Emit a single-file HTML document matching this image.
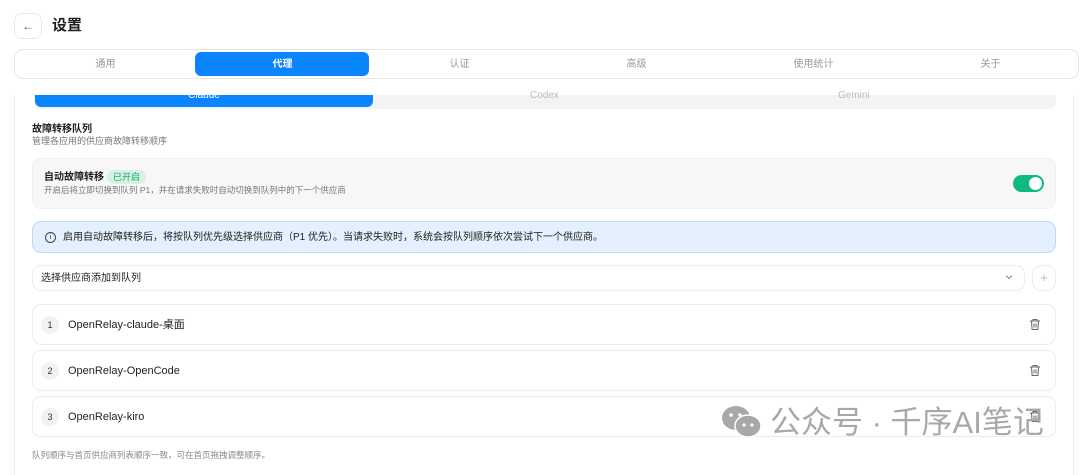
<!DOCTYPE html>
<html><head><meta charset="utf-8"><style>
*{box-sizing:border-box;margin:0;padding:0}
body{width:1080px;height:467px;overflow:hidden;background:#fff;font-family:"Liberation Sans","Noto Sans CJK SC",sans-serif;position:relative;color:#1f1f1f;line-height:1.2}
.abs{position:absolute}
.back{left:14px;top:13px;width:28px;height:26px;border:1px solid #e8e8e8;border-radius:8px;display:flex;align-items:center;justify-content:center;color:#666;font-size:12px}
.tabs{left:14px;top:49px;width:1065px;height:30px;border:1px solid #e6e6e6;border-radius:9px}
.tab{position:absolute;top:1px;height:28px;line-height:28px;font-size:10px;color:#999;text-align:center;width:177px}
.panel{left:14px;top:95px;width:1060px;height:380px;border-left:1px solid #eee;border-right:1px solid #eee}
.card{border:1px solid #ececec;border-radius:9px;background:#fff}
.item{left:32px;width:1024px;height:41px}
.num{position:absolute;left:8px;top:11px;width:18px;height:18px;border-radius:50%;background:#f2f2f2;font-size:9px;text-align:center;line-height:18px;color:#333}
.name{position:absolute;left:35px;top:1px;height:39px;line-height:39px;font-size:11px;color:#222}
.trash{position:absolute;right:14px;top:13px}
</style></head><body>
<div class="abs back">&#8592;</div>
<div class="abs" style="left:52px;top:16px;font-size:15px;font-weight:bold;line-height:20px">设置</div>
<div class="abs tabs">
<div class="abs" style="left:180px;top:2px;width:174px;height:24px;background:#0a84ff;border-radius:6px"></div>
<div class="tab" style="left:2px">通用</div>
<div class="tab" style="left:179px;color:#fff;font-weight:bold">代理</div>
<div class="tab" style="left:356px">认证</div>
<div class="tab" style="left:533px">高级</div>
<div class="tab" style="left:710px">使用统计</div>
<div class="tab" style="left:887px">关于</div>
</div>
<div class="abs panel"></div>
<div class="abs" style="left:34px;top:95px;width:1022px;height:14px;background:#f3f3f3;border-radius:0 0 7px 7px"></div>
<div class="abs" style="left:35px;top:95px;width:338px;height:12px;background:#0a84ff;border-radius:0 0 6px 6px;overflow:hidden;color:#fff;font-size:10px;text-align:center;line-height:2px">Claude</div>
<div class="abs" style="left:530px;top:95px;font-size:10px;color:#bbb;line-height:2px">Codex</div>
<div class="abs" style="left:838px;top:95px;font-size:10px;color:#bbb;line-height:2px">Gemini</div>
<div class="abs" style="left:32px;top:123px;font-size:10px;font-weight:bold;line-height:13px">故障转移队列</div>
<div class="abs" style="left:32px;top:136px;font-size:9px;color:#777;line-height:11px">管理各应用的供应商故障转移顺序</div>
<div class="abs" style="left:32px;top:158px;width:1024px;height:51px;background:#f7f7f7;border:1px solid #efefef;border-radius:9px"></div>
<div class="abs" style="left:44px;top:171px;font-size:10px;font-weight:bold;line-height:13px">自动故障转移</div>
<div class="abs" style="left:107px;top:170px;height:14px;padding:0 6px;background:#d5f2e5;color:#1aa56b;border-radius:7px;font-size:9px;line-height:14px">已开启</div>
<div class="abs" style="left:44px;top:185px;font-size:8.5px;color:#777;line-height:11px">开启后将立即切换到队列 P1，并在请求失败时自动切换到队列中的下一个供应商</div>
<div class="abs" style="left:1013px;top:175px;width:31px;height:17px;background:#10b981;border-radius:9px"><div class="abs" style="right:2px;top:2px;width:13px;height:13px;background:#fff;border-radius:50%"></div></div>
<div class="abs" style="left:32px;top:221px;width:1024px;height:32px;background:#e4f0fd;border:1px solid #bcd9f8;border-radius:9px"></div>
<div class="abs" style="left:45px;top:232px;width:11px;height:11px;border:1px solid #444;border-radius:50%;font-size:7px;text-align:center;line-height:9px">i</div>
<div class="abs" style="left:63px;top:231px;font-size:10px;color:#222;line-height:13px">启用自动故障转移后，将按队列优先级选择供应商（P1 优先）。当请求失败时，系统会按队列顺序依次尝试下一个供应商。</div>
<div class="abs card" style="left:32px;top:265px;width:993px;height:26px"></div>
<div class="abs" style="left:41px;top:266px;font-size:10px;line-height:26px">选择供应商添加到队列</div>
<svg class="abs" style="left:1005px;top:274px" width="8" height="6" viewBox="0 0 8 6"><path d="M1 1.5l3 3 3-3" fill="none" stroke="#888" stroke-width="1"/></svg>
<div class="abs card" style="left:1032px;top:265px;width:24px;height:26px;text-align:center;line-height:24px;color:#bbb;font-size:13px">+</div>
<div class="abs card item" style="top:304px"><div class="num">1</div><div class="name">OpenRelay-claude-桌面</div><svg class="trash" width="12" height="13" viewBox="0 0 12 13" fill="none" stroke="#666" stroke-width="1"><path d="M1 3h10M4 3V1.5h4V3M2.5 3l.6 8.5h5.8L9.5 3M5 5.5v4M7 5.5v4"/></svg></div>
<div class="abs card item" style="top:350px"><div class="num">2</div><div class="name">OpenRelay-OpenCode</div><svg class="trash" width="12" height="13" viewBox="0 0 12 13" fill="none" stroke="#666" stroke-width="1"><path d="M1 3h10M4 3V1.5h4V3M2.5 3l.6 8.5h5.8L9.5 3M5 5.5v4M7 5.5v4"/></svg></div>
<div class="abs card item" style="top:396px"><div class="num">3</div><div class="name">OpenRelay-kiro</div><svg class="trash" width="12" height="13" viewBox="0 0 12 13" fill="none" stroke="#666" stroke-width="1"><path d="M1 3h10M4 3V1.5h4V3M2.5 3l.6 8.5h5.8L9.5 3M5 5.5v4M7 5.5v4"/></svg></div>
<div class="abs" style="left:32px;top:450px;font-size:8.5px;color:#888;line-height:11px">队列顺序与首页供应商列表顺序一致，可在首页拖拽调整顺序。</div>
<svg class="abs" style="left:721px;top:405px" width="42" height="34" viewBox="0 0 42 34"><ellipse cx="15" cy="13" rx="14" ry="12" fill="#a8a8a8"/><ellipse cx="27" cy="21" rx="13" ry="11" fill="#a8a8a8" stroke="#fff" stroke-width="1.5"/><circle cx="10" cy="10" r="1.8" fill="#fff"/><circle cx="19" cy="10" r="1.8" fill="#fff"/><circle cx="23" cy="20" r="1.6" fill="#fff"/><circle cx="31" cy="20" r="1.6" fill="#fff"/></svg>
<div class="abs" style="left:770px;top:403px;font-size:31px;color:#a8a8a8;white-space:nowrap;line-height:40px">公众号 · 千序AI笔记</div>
</body></html>
